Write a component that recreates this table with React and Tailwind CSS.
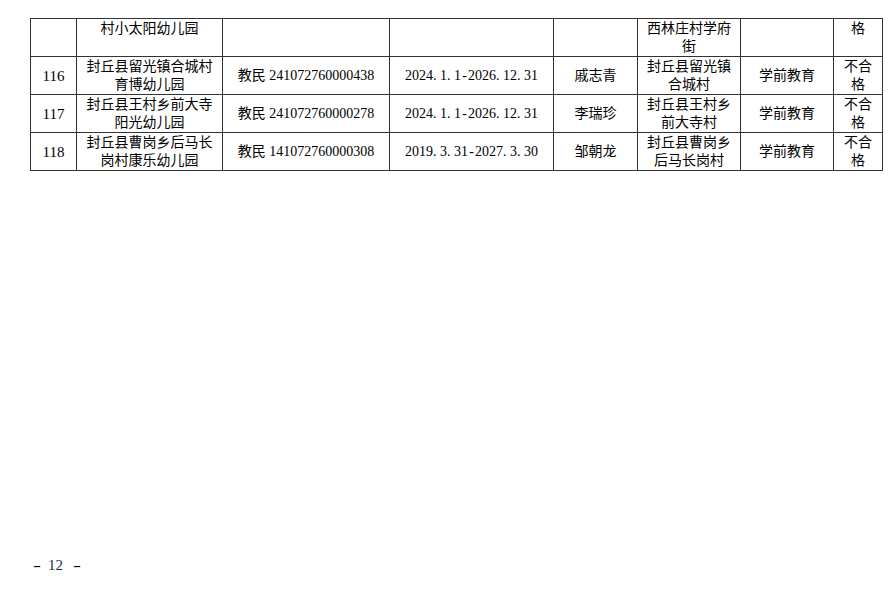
const F = { fontFamily: '"Liberation Serif", "Noto Sans CJK SC", serif' };

// half-width punctuation in the source font is as wide as a digit
const N = ({ t }) => (
  <>
    {t.split("").map((c, i) =>
      c === "." ? (
        <span key={i} className="inline-block w-[7px] text-left">.</span>
      ) : c === "-" ? (
        <span key={i} className="inline-block w-[7px] text-center">-</span>
      ) : (
        c
      )
    )}
  </>
);

const rows = [
  {
    no: "116",
    name: ["封丘县留光镇合城村", "育博幼儿园"],
    cert: "241072760000438",
    date: "2024.1.1-2026.12.31",
    person: "戚志青",
    addr: ["封丘县留光镇", "合城村"],
  },
  {
    no: "117",
    name: ["封丘县王村乡前大寺", "阳光幼儿园"],
    cert: "241072760000278",
    date: "2024.1.1-2026.12.31",
    person: "李瑞珍",
    addr: ["封丘县王村乡", "前大寺村"],
  },
  {
    no: "118",
    name: ["封丘县曹岗乡后马长", "岗村康乐幼儿园"],
    cert: "141072760000308",
    date: "2019.3.31-2027.3.30",
    person: "邹朝龙",
    addr: ["封丘县曹岗乡", "后马长岗村"],
  },
];

const td = "border border-[#333] p-0 text-center align-middle";

export default function App() {
  return (
    <div className="w-[894px] h-[595px] bg-white text-black flex flex-col" style={F}>
      <div className="pt-[18px] pl-[30px]">
        <table className="border-collapse border border-black text-[14px] leading-[18px] table-fixed w-[852px]">
          <colgroup>
            <col className="w-[46px]" />
            <col className="w-[146px]" />
            <col className="w-[167px]" />
            <col className="w-[164px]" />
            <col className="w-[84px]" />
            <col className="w-[103px]" />
            <col className="w-[93px]" />
            <col className="w-[49px]" />
          </colgroup>
          <tbody>
            <tr className="h-[38px]">
              <td className={td}></td>
              <td className={`${td} align-top pt-px`}>村小太阳幼儿园</td>
              <td className={td}></td>
              <td className={td}></td>
              <td className={td}></td>
              <td className={`${td} align-top pt-px`}>
                西林庄村学府
                <br />街
              </td>
              <td className={td}></td>
              <td className={`${td} align-top pt-px`}>格</td>
            </tr>
            {rows.map((r) => (
              <tr key={r.no} className="h-[38px]">
                <td className={`${td} text-[15px]`}>{r.no}</td>
                <td className={td}>
                  {r.name[0]}
                  <br />
                  {r.name[1]}
                </td>
                <td className={td}>
                  教民 {r.cert}
                </td>
                <td className={td}>
                  <N t={r.date} />
                </td>
                <td className={td}>{r.person}</td>
                <td className={td}>
                  {r.addr[0]}
                  <br />
                  {r.addr[1]}
                </td>
                <td className={td}>学前教育</td>
                <td className={td}>
                  不合
                  <br />格
                </td>
              </tr>
            ))}
          </tbody>
        </table>
      </div>
      <div className="mt-auto mb-[20px] pl-[33px] text-[15px] leading-[20px] flex items-center">
        <span className="inline-block w-[8px] scale-x-[1.6] text-center">-</span>
        <span className="ml-[7px] text-[#1a2a4a]">12</span>
        <span className="ml-[10px] inline-block w-[8px] scale-x-[1.6] text-center">-</span>
      </div>
    </div>
  );
}
